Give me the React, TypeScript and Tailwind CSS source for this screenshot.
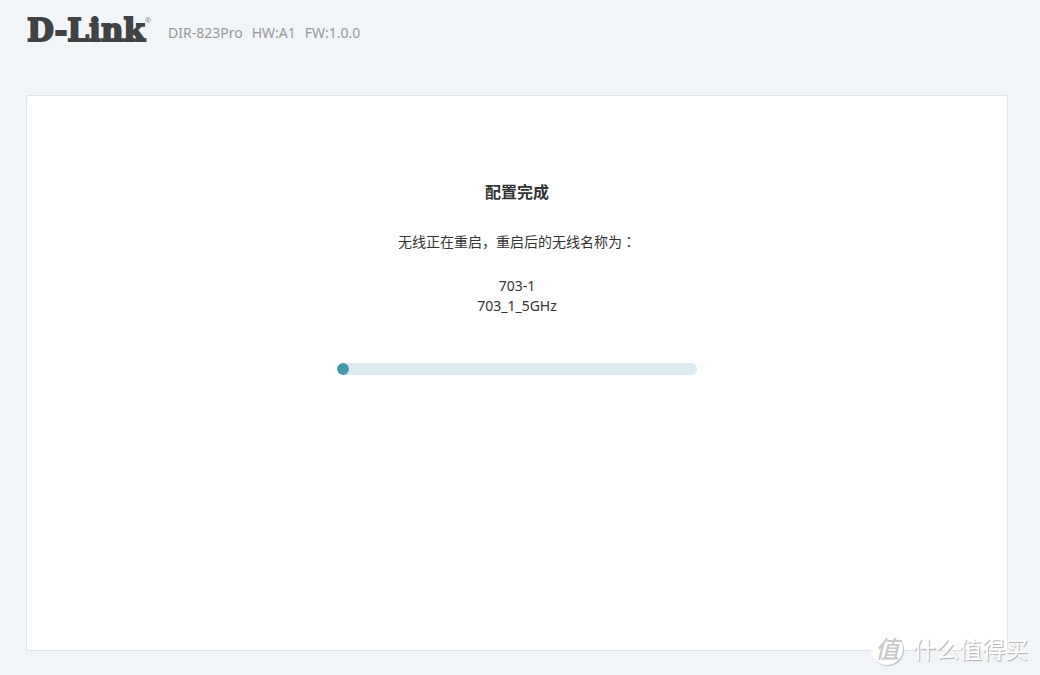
function Logo() {
  return (
    <svg
      role="img"
      aria-label="D-Link"
      viewBox="0 0 124 30"
      className="h-[30px] w-[124px] shrink-0 overflow-visible"
    >
      <text
        x="1"
        y="25"
        className="fill-[#414244] stroke-[#414244] stroke-[1.8px] font-['DejaVu_Serif',serif] text-[31px] font-bold"
      >
        D-Link
      </text>
      <text
        x="119"
        y="7"
        className="fill-[#77797b] font-['Liberation_Sans',sans-serif] text-[8px]"
      >
        ®
      </text>
    </svg>
  );
}

function Watermark() {
  return (
    <div className="pointer-events-none absolute right-3 bottom-[10px] flex items-center gap-[10px] text-white select-none">
      <span className="flex size-8 items-center justify-center rounded-full bg-white text-2xl leading-8 font-medium text-[#c6c8ca] italic shadow-[1px_1px_1px_#b9bdc0]">
        值
      </span>
      <span className="text-[23px] leading-8 text-shadow-[1px_1px_1px_#a9adb0]">
        什么值得买
      </span>
    </div>
  );
}

export default function App() {
  const progress = 12 / 360;
  const networks = ["703-1", "703_1_5GHz"];

  return (
    <div className="relative flex min-h-screen flex-col bg-[#f1f5f8] pr-8 pb-6 pl-[26px] font-['Noto_Sans','Noto_Sans_CJK_SC',sans-serif] text-sm leading-5 text-[#333333]">
      <header className="flex h-[95px] items-start gap-[18px] pt-4">
        <Logo />
        <p className="flex gap-[9px] pt-[7px] text-[#999999]">
          <span>DIR-823Pro</span>
          <span>HW:A1</span>
          <span>FW:1.0.0</span>
        </p>
      </header>
      <main className="flex flex-1 flex-col items-center rounded-xs border border-[#dfe4e8] bg-white px-6 pt-[84px] text-center">
        <h1 className="text-base leading-6 font-bold">配置完成</h1>
        <p className="mt-[27px]">
          无线正在重启，重启后的无线名称为
          <span className="font-['Noto_Sans_CJK_TC',sans-serif]">：</span>
        </p>
        <ul className="mt-6">
          {networks.map((name) => (
            <li key={name}>{name}</li>
          ))}
        </ul>
        <div
          role="progressbar"
          aria-label="配置完成"
          aria-valuemin={0}
          aria-valuemax={100}
          aria-valuenow={Math.round(progress * 100)}
          className="mt-[47px] h-3 w-full max-w-[360px] overflow-hidden rounded-full bg-[#dcebf0]"
        >
          <div
            className="h-full rounded-full bg-[#4398ab]"
            style={{ width: `${progress * 100}%` }}
          />
        </div>
      </main>
      <Watermark />
    </div>
  );
}
